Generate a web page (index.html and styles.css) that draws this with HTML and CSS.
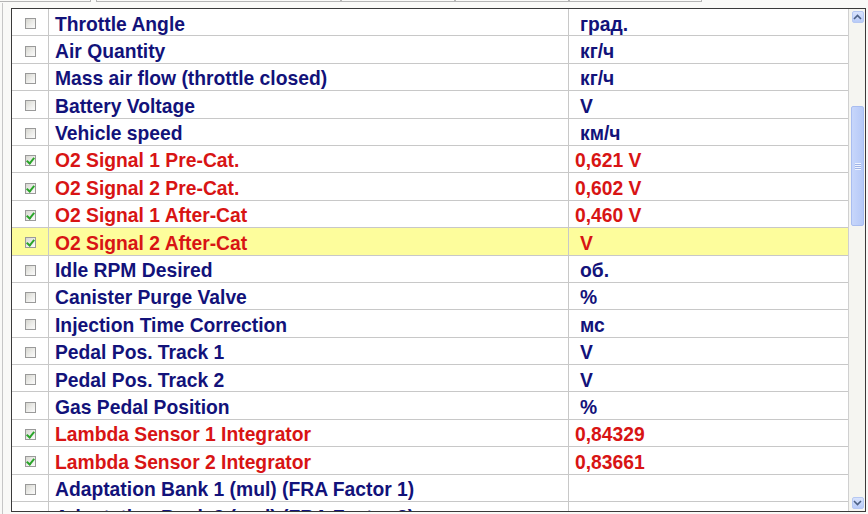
FILE: index.html
```html
<!DOCTYPE html>
<html>
<head>
<meta charset="utf-8">
<link rel="stylesheet" href="styles.css">
</head>
<body>
<div class="tabstrip">
  <div class="tab t1"></div>
  <div class="tab t2"></div>
  <div class="tab t3"></div>
  <div class="tab t4"></div>
  <div class="tab t5"></div>
</div>
<div class="page">
  <div class="listview">
    <div class="rows">
      <div class="row"><div class="c1"><span class="cb"></span></div><div class="c2">Throttle Angle</div><div class="c3"><span class="unit">град.</span></div></div>
      <div class="row"><div class="c1"><span class="cb"></span></div><div class="c2">Air Quantity</div><div class="c3"><span class="unit">кг/ч</span></div></div>
      <div class="row"><div class="c1"><span class="cb"></span></div><div class="c2">Mass air flow (throttle closed)</div><div class="c3"><span class="unit">кг/ч</span></div></div>
      <div class="row"><div class="c1"><span class="cb"></span></div><div class="c2">Battery Voltage</div><div class="c3"><span class="unit">V</span></div></div>
      <div class="row"><div class="c1"><span class="cb"></span></div><div class="c2">Vehicle speed</div><div class="c3"><span class="unit">км/ч</span></div></div>
      <div class="row on"><div class="c1"><span class="cb checked"></span></div><div class="c2">O2 Signal 1 Pre-Cat.</div><div class="c3">0,621 V</div></div>
      <div class="row on"><div class="c1"><span class="cb checked"></span></div><div class="c2">O2 Signal 2 Pre-Cat.</div><div class="c3">0,602 V</div></div>
      <div class="row on"><div class="c1"><span class="cb checked"></span></div><div class="c2">O2 Signal 1 After-Cat</div><div class="c3">0,460 V</div></div>
      <div class="row on selected"><div class="c1"><span class="cb checked"></span></div><div class="c2">O2 Signal 2 After-Cat</div><div class="c3"><span class="unit">V</span></div></div>
      <div class="row"><div class="c1"><span class="cb"></span></div><div class="c2">Idle RPM Desired</div><div class="c3"><span class="unit">об.</span></div></div>
      <div class="row"><div class="c1"><span class="cb"></span></div><div class="c2">Canister Purge Valve</div><div class="c3"><span class="unit">%</span></div></div>
      <div class="row"><div class="c1"><span class="cb"></span></div><div class="c2">Injection Time Correction</div><div class="c3"><span class="unit">мс</span></div></div>
      <div class="row"><div class="c1"><span class="cb"></span></div><div class="c2">Pedal Pos. Track 1</div><div class="c3"><span class="unit">V</span></div></div>
      <div class="row"><div class="c1"><span class="cb"></span></div><div class="c2">Pedal Pos. Track 2</div><div class="c3"><span class="unit">V</span></div></div>
      <div class="row"><div class="c1"><span class="cb"></span></div><div class="c2">Gas Pedal Position</div><div class="c3"><span class="unit">%</span></div></div>
      <div class="row on"><div class="c1"><span class="cb checked"></span></div><div class="c2">Lambda Sensor 1 Integrator</div><div class="c3">0,84329</div></div>
      <div class="row on"><div class="c1"><span class="cb checked"></span></div><div class="c2">Lambda Sensor 2 Integrator</div><div class="c3">0,83661</div></div>
      <div class="row"><div class="c1"><span class="cb"></span></div><div class="c2">Adaptation Bank 1 (mul) (FRA Factor 1)</div><div class="c3"></div></div>
      <div class="row"><div class="c1"><span class="cb"></span></div><div class="c2">Adaptation Bank 2 (mul) (FRA Factor 2)</div><div class="c3"></div></div>
    </div>
    <div class="scrollbar">
      <div class="sbtn up"><svg width="9" height="6" viewBox="0 0 9 6"><path d="M1 5 L4.5 1.5 L8 5" fill="none" stroke="#4d6185" stroke-width="1.6"/></svg></div>
      <div class="track">
        <div class="thumb"><span class="grip"></span></div>
      </div>
      <div class="sbtn down"><svg width="9" height="6" viewBox="0 0 9 6"><path d="M1 1 L4.5 4.5 L8 1" fill="none" stroke="#4d6185" stroke-width="1.6"/></svg></div>
    </div>
  </div>
</div>
</body>
</html>
```
FILE: styles.css
```css
* { box-sizing: border-box; }
html, body { margin: 0; padding: 0; }
body {
  width: 868px;
  height: 514px;
  overflow: hidden;
  background: #f9f9f7;
  font-family: "Liberation Sans", Arial, sans-serif;
}
.tabstrip {
  display: flex;
  height: 3px;
}
.tab {
  height: 2px;
  border-bottom: 1px solid #b4b4b4;
  border-left: 1px solid #b4b4b4;
  border-right: 1px solid #b4b4b4;
}
.t1 { width: 91px; border-left: none; }
.t2 { width: 245px; margin-left: 5px; }
.t3 { width: 114px; }
.t4 { width: 114px; }
.t5 { width: 133px; }
.page {
  margin-left: 2px;
  border-left: 1px solid #c6c6c6;
  padding: 5px 0 0 8px;
  height: 511px;
}
.listview {
  width: 855px;
  height: 504px;
  border: 1px solid #3a3a3a;
  background: #fff;
  display: flex;
  overflow: hidden;
}
.rows {
  width: 836px;
  overflow: hidden;
}
.row {
  display: flex;
  height: 27.4px;
  border-bottom: 1px solid #c8c8c8;
  font-size: 19.3px;
  font-weight: bold;
  color: #12127a;
}
.row.on { color: #d81414; }
.row.selected { background: #fdfd9c; }
.c1 {
  width: 37px;
  border-right: 1px solid #c8c8c8;
  display: flex;
  align-items: center;
  justify-content: center;
  padding-top: 3px;
  padding-left: 1px;
}
.c2 {
  width: 520px;
  border-right: 1px solid #c8c8c8;
  padding-left: 6px;
  padding-top: 2.5px;
  white-space: nowrap;
  overflow: hidden;
  line-height: 26px;
}
.c3 {
  width: 279px;
  padding-left: 6px;
  padding-top: 2.5px;
  white-space: nowrap;
  line-height: 26px;
}
.unit { margin-left: 5px; }
.cb {
  width: 11px;
  height: 11px;
  border: 1px solid #9a9a9a;
  background: linear-gradient(135deg, #d6d6d0 0%, #ededea 55%, #fbfbfb 100%);
  position: relative;
}
.cb.checked::after {
  content: "";
  position: absolute;
  left: 2px;
  top: 0px;
  width: 3px;
  height: 6px;
  border-right: 2px solid #2aa52a;
  border-bottom: 2px solid #2aa52a;
  transform: rotate(40deg);
}
.scrollbar {
  width: 17px;
  background: #f5f5f1;
  border-left: 1px solid #d0d0d0;
  display: flex;
  flex-direction: column;
  align-items: center;
  padding: 2px 0 2px 1px;
}
.sbtn {
  width: 12px;
  height: 12px;
  border: 1px solid #b6c8f2;
  border-radius: 2px;
  background: linear-gradient(180deg, #d8e3fd, #b8cbf8);
  display: flex;
  align-items: center;
  justify-content: center;
}
.track {
  flex: 1;
  width: 100%;
  padding-top: 83px;
  display: flex;
  justify-content: center;
}
.thumb {
  width: 13px;
  height: 120px;
  border: 1px solid #a9bdf0;
  border-radius: 2px;
  background: linear-gradient(90deg, #c7d6fb, #b6c9f7);
  display: flex;
  align-items: center;
  justify-content: center;
}
.grip {
  width: 6px;
  height: 7px;
  background: repeating-linear-gradient(180deg, #eef3ff 0 1px, #9fb3e6 1px 2px);
}
```
